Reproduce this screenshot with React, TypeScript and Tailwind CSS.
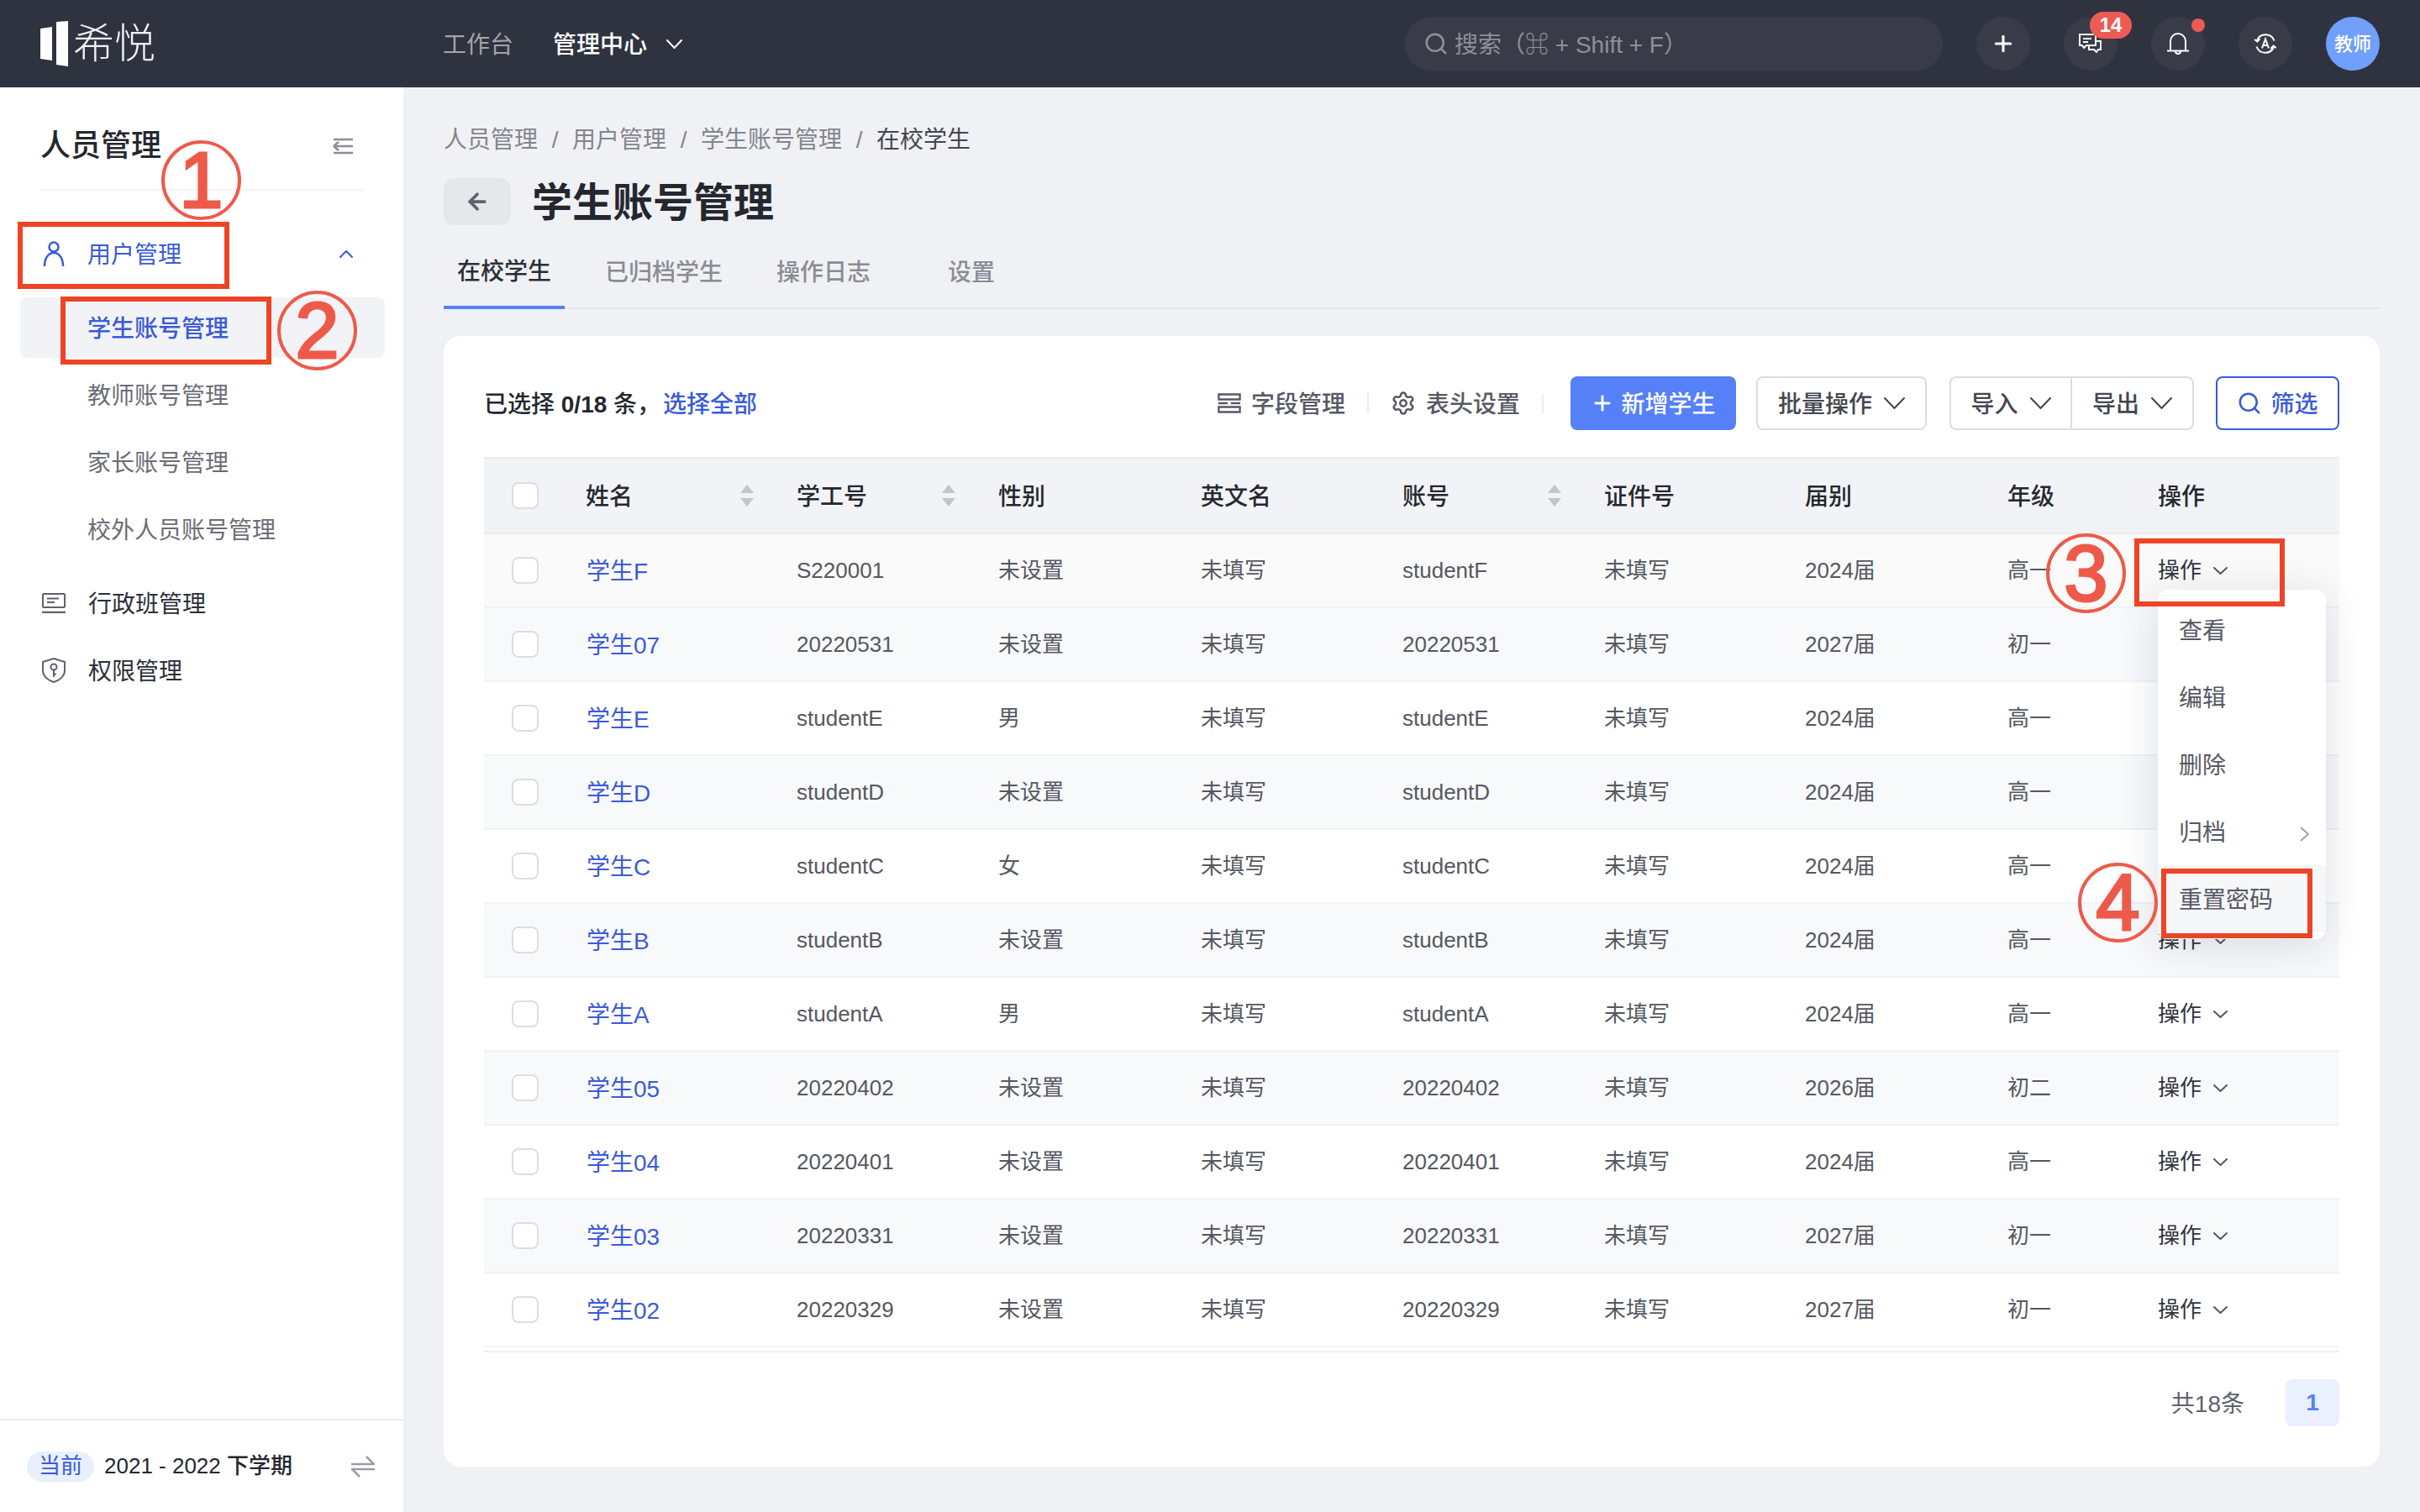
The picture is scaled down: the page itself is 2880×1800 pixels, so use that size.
import { ArrowLeft, Plus, Search, Settings } from "lucide-react";

const COLS =
  "grid grid-cols-[105px_251px_240px_241px_240px_240px_239px_241px_179px_232px] items-center";

const rows = [
  ["学生F", "S220001", "未设置", "studentF", "2024届", "高一"],
  ["学生07", "20220531", "未设置", "20220531", "2027届", "初一"],
  ["学生E", "studentE", "男", "studentE", "2024届", "高一"],
  ["学生D", "studentD", "未设置", "studentD", "2024届", "高一"],
  ["学生C", "studentC", "女", "studentC", "2024届", "高一"],
  ["学生B", "studentB", "未设置", "studentB", "2024届", "高一"],
  ["学生A", "studentA", "男", "studentA", "2024届", "高一"],
  ["学生05", "20220402", "未设置", "20220402", "2026届", "初二"],
  ["学生04", "20220401", "未设置", "20220401", "2024届", "高一"],
  ["学生03", "20220331", "未设置", "20220331", "2027届", "初一"],
  ["学生02", "20220329", "未设置", "20220329", "2027届", "初一"],
];

function Caret({ w, h, className }: { w: number; h: number; className?: string }) {
  return (
    <svg width={w} height={h} viewBox={`0 0 ${w} ${h}`} fill="none" className={className}>
      <polyline
        points={`1,1 ${w / 2},${h - 1} ${w - 1},1`}
        stroke="currentColor"
        strokeWidth="2"
        strokeLinecap="round"
        strokeLinejoin="round"
      />
    </svg>
  );
}

function SortIcon() {
  return (
    <svg width="16" height="26" viewBox="0 0 16 26" className="text-[#c4c5c9]">
      <path d="M8 0L16 10H0Z M0 16H16L8 26Z" fill="currentColor" />
    </svg>
  );
}

function Checkbox() {
  return <div className="h-8 w-8 rounded-lg border-2 border-[#dcdee2] bg-white" />;
}

// CJK glyphs sit a little high in the line box, pt-1 brings them back to the icon's centre
function Label({ children, className }: { children: React.ReactNode; className?: string }) {
  return <span className={`pt-1 ${className ?? ""}`}>{children}</span>;
}

function HeadCell({ label, sort }: { label: string; sort?: boolean }) {
  return (
    <div className="flex items-center justify-between pl-4 pr-[35px] text-[28px] font-medium text-[#25272e]">
      <Label>{label}</Label>
      {sort && <SortIcon />}
    </div>
  );
}

function Circled({ n, className }: { n: number; className: string }) {
  return (
    <div
      className={`absolute flex h-[95px] w-[95px] items-center justify-center rounded-full border-4 border-[#ee5a4a] text-[94px] font-normal leading-none text-[#ee5a4a] [-webkit-text-stroke:3px_#ee5a4a] ${className}`}
    >
      {n}
    </div>
  );
}

function Header() {
  return (
    <header className="flex h-[104px] shrink-0 items-center bg-[#2f3340] pr-12">
      <div className="flex w-[527px] items-center pl-12">
        <svg width="34" height="54" viewBox="0 0 34 54" fill="#fff">
          <path d="M0 9L14 7V47L0 45Z M19 1L33 0V54L19 52Z" />
        </svg>
        <span className="ml-[5px] text-[49px] font-light leading-none text-[#f1f1f3]">希悦</span>
      </div>
      <Label className="text-[28px] text-[#a3a5ab]">工作台</Label>
      <Label className="ml-[47px] text-[28px] font-medium text-white">管理中心</Label>
      <Caret w={19} h={11} className="ml-[23px] text-white" />

      <div className="ml-auto flex items-center gap-10">
        <div className="flex h-16 w-[640px] items-center rounded-full bg-[#393c48] pl-[22px] text-[28px] text-[#8f9198]">
          <Search size={30} strokeWidth={2} />
          <Label className="ml-[7px]">搜索（⌘ + Shift + F）</Label>
        </div>
        <div className="flex h-16 w-16 items-center justify-center rounded-full bg-[#393c48] text-white">
          <Plus size={30} strokeWidth={2.5} />
        </div>
        <div className="relative flex h-16 w-16 items-center justify-center rounded-full bg-[#393c48] text-white">
          <svg width="28" height="24" viewBox="0 0 28 24" fill="none" stroke="currentColor" strokeWidth="2">
            <path d="M1 1H20V14H9L6 17L4 14H1Z" />
            <path d="M5 6H15M5 10H11" />
            <path d="M20 9H26V19H23L21 22L18 19H12V14" />
          </svg>
          <span className="absolute left-[31px] top-[-6px] flex h-8 w-[50px] items-center justify-center rounded-full bg-[#ee5a55] text-[24px] font-bold text-white">
            14
          </span>
        </div>
        <div className="relative flex h-16 w-16 items-center justify-center rounded-full bg-[#393c48] text-white">
          <svg width="26" height="26" viewBox="0 0 26 26" fill="none" stroke="currentColor" strokeWidth="2">
            <path d="M4 21V10a9 9 0 0 1 18 0V21" />
            <path d="M0 21.5H26" />
            <path d="M10 22a3 3 0 0 0 6 0" />
          </svg>
          <span className="absolute right-0 top-[2px] h-4 w-4 rounded-full bg-[#ee5a55]" />
        </div>
        <div className="flex h-16 w-16 items-center justify-center rounded-full bg-[#393c48] text-white">
          <svg width="26" height="26" viewBox="0 0 26 26" fill="none" stroke="currentColor" strokeWidth="2">
            <path d="M3 9A11 11 0 0 1 23.5 9.5" />
            <path d="M23 17A11 11 0 0 1 2.5 16.5" />
            <path d="M0 8L3.5 10.5L6.5 7M26 18L22.5 15.5L19.5 19" />
            <path d="M9 18.5L13 7.5L17 18.5M10.5 15H15.5" />
          </svg>
        </div>
        <div className="flex h-16 w-16 items-center justify-center rounded-full bg-[#70a0fb] text-[22px] font-medium text-white">
          教师
        </div>
      </div>
    </header>
  );
}

function Sidebar() {
  return (
    <aside className="flex w-[480px] shrink-0 flex-col bg-white">
      <div className="mx-12 flex h-[123px] items-center justify-between border-b-2 border-[#f1f2f4] pt-[18px]">
        <h2 className="text-[36px] font-medium leading-[56px] text-[#25272e]">人员管理</h2>
        <svg width="24" height="20" viewBox="0 0 24 20" fill="none" stroke="#8b8e97" strokeWidth="2.5" className="mr-3">
          <path d="M1 2H24M1 10H24M1 18H24M1 10L7 5M1 10L7 15" />
        </svg>
      </div>

      <nav className="mt-[35px] text-[28px]">
        <div className="flex h-20 items-center pl-[51px] pr-[60px] text-[#3a5bd9]">
          <svg width="26" height="30" viewBox="0 0 26 30" fill="none" stroke="currentColor" strokeWidth="2.5">
            <circle cx="13" cy="7" r="5.5" />
            <path d="M2 30C2 21 6 14 13 14S24 21 24 30" />
          </svg>
          <Label className="ml-[27px]">用户管理</Label>
          <Caret w={16} h={9} className="ml-auto rotate-180 text-[#3a5bd9]" />
        </div>
        <div className="mt-2 flex flex-col">
          <div className="flex h-20 items-center py-1 pl-6 pr-[22px]">
            <div className="flex h-full w-full items-center rounded-lg bg-[#f2f3f7] pl-20 font-medium text-[#3a5bd9]">
              <Label>学生账号管理</Label>
            </div>
          </div>
          <div className="flex h-20 items-center pl-[104px] text-[#6a6d76]">
            <Label>教师账号管理</Label>
          </div>
          <div className="flex h-20 items-center pl-[104px] text-[#6a6d76]">
            <Label>家长账号管理</Label>
          </div>
          <div className="flex h-20 items-center pl-[104px] text-[#6a6d76]">
            <Label>校外人员账号管理</Label>
          </div>
        </div>
        <div className="mt-2 flex h-20 items-center pl-[50px] text-[#2b2e38]">
          <svg width="28" height="24" viewBox="0 0 28 24" fill="none" stroke="#5f626d" strokeWidth="2">
            <rect x="1" y="1" width="26" height="16" rx="1" />
            <path d="M6 6.5H20M6 11H15" />
            <path d="M0 23H28" strokeWidth="2.5" />
          </svg>
          <Label className="ml-[27px]">行政班管理</Label>
        </div>
        <div className="flex h-20 items-center pl-[50px] text-[#2b2e38]">
          <svg width="28" height="30" viewBox="0 0 28 30" fill="none" stroke="#5f626d" strokeWidth="2">
            <path d="M14 1L27 5V15C27 22 21 27 14 29C7 27 1 22 1 15V5Z" />
            <circle cx="14" cy="11" r="3.5" />
            <path d="M14 14.5V23M14 19.5H17" />
          </svg>
          <Label className="ml-[27px]">权限管理</Label>
        </div>
      </nav>

      <div className="mt-auto flex h-[111px] items-center border-t-2 border-[#ececee] pl-8 pr-[34px]">
        <span className="flex h-9 w-20 items-center justify-center rounded-full bg-[#e8effd] text-[26px] text-[#3a5bd9]">
          当前
        </span>
        <span className="ml-3 text-[26px] font-medium text-[#25272e]">2021 - 2022 下学期</span>
        <svg width="28" height="26" viewBox="0 0 28 26" fill="none" stroke="#9a9ca5" strokeWidth="2.5" className="ml-auto">
          <path d="M0 10H27L18 1" />
          <path d="M28 16H1L10 25" />
        </svg>
      </div>
    </aside>
  );
}

function Toolbar() {
  return (
    <div className="flex h-16 items-center">
      <div className="pt-1 text-[28px] font-medium text-[#25272e]">
        已选择 <span className="font-bold">0/18</span> 条，<span className="ml-[3px] text-[#3a5bd9]">选择全部</span>
      </div>
      <div className="ml-auto flex items-center text-[28px] font-medium text-[#565963]">
        <svg width="28" height="24" viewBox="0 0 30 24" fill="none" stroke="currentColor" strokeWidth="2.5" preserveAspectRatio="none" className="ml-[2px]">
          <rect x="1.5" y="1.5" width="27" height="6" />
          <path d="M1 12H13M17 12H29" />
          <rect x="1.5" y="16.5" width="27" height="6" />
        </svg>
        <Label className="ml-3">字段管理</Label>
        <span className="mx-[26px] h-6 w-[2px] bg-[#ececee]" />
        <Settings size={30} strokeWidth={2} />
        <Label className="ml-3">表头设置</Label>
        <span className="ml-[26px] mr-8 h-6 w-[2px] bg-[#ececee]" />

        <button className="mr-6 flex h-16 w-[197px] items-center justify-center gap-2 rounded-lg bg-[#5580f8] text-white">
          <Plus size={28} strokeWidth={2.5} />
          <Label>新增学生</Label>
        </button>
        <button className="mr-[27px] flex h-16 w-[203px] items-center justify-center gap-[14px] rounded-lg border-2 border-[#dcdde1] text-[#43464f]">
          <Label>批量操作</Label>
          <Caret w={25} h={14} />
        </button>
        <div className="mr-[26px] flex h-16 w-[291px] items-center rounded-lg border-2 border-[#dcdde1] text-[#43464f]">
          <div className="flex h-full w-[144px] items-center justify-center gap-[14px] border-r-2 border-[#dcdde1]">
            <Label>导入</Label>
            <Caret w={25} h={14} />
          </div>
          <div className="flex h-full flex-1 items-center justify-center gap-[14px]">
            <Label>导出</Label>
            <Caret w={25} h={14} />
          </div>
        </div>
        <button className="flex h-16 w-[147px] items-center justify-center gap-[10px] rounded-lg border-2 border-[#3a5bd9] text-[#3a5bd9]">
          <Search size={30} strokeWidth={2} />
          <Label>筛选</Label>
        </button>
      </div>
    </div>
  );
}

function Table() {
  return (
    <div className="mt-8">
      <div className={`${COLS} h-[92px] border-y-2 border-[#ecedef] bg-[#f2f3f7]`}>
        <div className="pl-[33px]">
          <Checkbox />
        </div>
        <HeadCell label="姓名" sort />
        <HeadCell label="学工号" sort />
        <HeadCell label="性别" />
        <HeadCell label="英文名" />
        <HeadCell label="账号" sort />
        <HeadCell label="证件号" />
        <HeadCell label="届别" />
        <HeadCell label="年级" />
        <HeadCell label="操作" />
      </div>
      {rows.map((r, i) => (
        <div
          key={r[0]}
          className={`${COLS} h-[88px] border-b-2 border-[#f1f2f4] text-[26px] text-[#55585f] ${
            i === 0 ? "bg-[#fafafa]" : i % 2 === 1 ? "bg-[#f8f9fb]" : "bg-white"
          }`}
        >
          <div className="pl-[33px]">
            <Checkbox />
          </div>
          <div className="pl-[17px] pt-1 text-[28px] text-[#3a5bd9]">{r[0]}</div>
          <div className="pl-4">{r[1]}</div>
          <div className="pl-4">{r[2]}</div>
          <div className="pl-4">未填写</div>
          <div className="pl-4">{r[3]}</div>
          <div className="pl-4">未填写</div>
          <div className="pl-4">{r[4]}</div>
          <div className="pl-4">{r[5]}</div>
          <div className="flex items-center pl-4 text-[#30333d]">
            操作
            <Caret w={17} h={9} className="ml-[14px] text-[#55585f]" />
          </div>
        </div>
      ))}
      <div className="mt-1 h-[2px] bg-[#ecedef]" />
    </div>
  );
}

function ActionMenu() {
  const items = ["查看", "编辑", "删除", "归档", "重置密码"];
  return (
    <div className="absolute left-[2568px] top-[702px] w-[200px] rounded-xl bg-white py-2 text-[28px] text-[#565963] shadow-[0_8px_48px_rgba(30,35,60,0.14)]">
      {items.map((item) => (
        <div
          key={item}
          className={`flex h-20 items-center justify-between pl-[25px] pr-5 ${
            item === "重置密码" ? "bg-[#f6f7f9]" : ""
          }`}
        >
          <Label>{item}</Label>
          {item === "归档" && (
            <svg width="11" height="18" viewBox="0 0 11 18" fill="none" stroke="#9a9ca5" strokeWidth="1.8" className="mt-[6px]">
              <path d="M1 1L10 9L1 17" />
            </svg>
          )}
        </div>
      ))}
    </div>
  );
}

function Main() {
  return (
    <main className="min-w-0 flex-1 bg-[#f0f1f5] px-12 pt-[41px]">
      <div className="flex h-10 items-center pt-1 text-[28px] text-[#83858d]">
        <span>人员管理</span>
        <span className="w-[41px] text-center">/</span>
        <span>用户管理</span>
        <span className="w-[41px] text-center">/</span>
        <span>学生账号管理</span>
        <span className="w-[41px] text-center">/</span>
        <span className="text-[#43464f]">在校学生</span>
      </div>

      <div className="mt-[27px] flex items-center">
        <div className="flex h-14 w-20 items-center justify-center rounded-xl bg-[#e5e7eb] text-[#5f626d]">
          <ArrowLeft size={30} strokeWidth={3} />
        </div>
        <h1 className="ml-[25px] pt-1 text-[48px] font-bold leading-[52px] text-[#25272e]">学生账号管理</h1>
      </div>

      <div className="mt-[6px] flex border-b-2 border-[#e3e5ea] text-[28px]">
        <div className="-mb-[2px] flex h-[94px] items-center border-b-4 border-[#5580f8] px-4 pt-[9px] font-medium text-[#2b2e38]">
          在校学生
        </div>
        <div className="ml-8 flex h-[92px] items-center px-4 pt-[9px] font-medium text-[#8a8c94]">已归档学生</div>
        <div className="ml-8 flex h-[92px] items-center px-4 pt-[9px] font-medium text-[#8a8c94]">操作日志</div>
        <div className="ml-8 flex h-[92px] min-w-[144px] items-center justify-center px-4 pt-[9px] font-medium text-[#8a8c94]">
          设置
        </div>
      </div>

      <section className="mt-8 h-[1346px] rounded-[20px] bg-white px-12 pt-12">
        <Toolbar />
        <Table />
        <div className="mt-8 flex items-center justify-end">
          <Label className="text-[28px] text-[#5f626d]">共18条</Label>
          <span className="ml-[49px] flex h-14 w-16 items-center justify-center rounded-lg bg-[#eaf0fe] text-[28px] font-bold text-[#5580f8]">
            1
          </span>
        </div>
      </section>
    </main>
  );
}

export default function App() {
  return (
    <div className="relative flex h-[1800px] w-[2880px] flex-col overflow-hidden font-['Liberation_Sans','Noto_Sans_CJK_SC','DejaVu_Sans',sans-serif]">
      <Header />
      <div className="flex min-h-0 flex-1">
        <Sidebar />
        <Main />
      </div>

      <ActionMenu />

      {/* red callouts drawn on the screenshot */}
      <div className="absolute left-[21px] top-[264px] h-[80px] w-[252px] border-[6px] border-[#ee4426]" />
      <div className="absolute left-[72px] top-[353px] h-[81px] w-[251px] border-[6px] border-[#ee4426]" />
      <div className="absolute left-[2540px] top-[641px] h-[81px] w-[179px] border-[6px] border-[#ee4426]" />
      <div className="absolute left-[2572px] top-[1034px] h-[83px] w-[180px] border-[6px] border-[#ee4426]" />
      <Circled n={1} className="left-[192px] top-[167px]" />
      <Circled n={2} className="left-[330px] top-[346px]" />
      <Circled n={3} className="left-[2435px] top-[635px]" />
      <Circled n={4} className="left-[2473px] top-[1027px]" />
    </div>
  );
}
